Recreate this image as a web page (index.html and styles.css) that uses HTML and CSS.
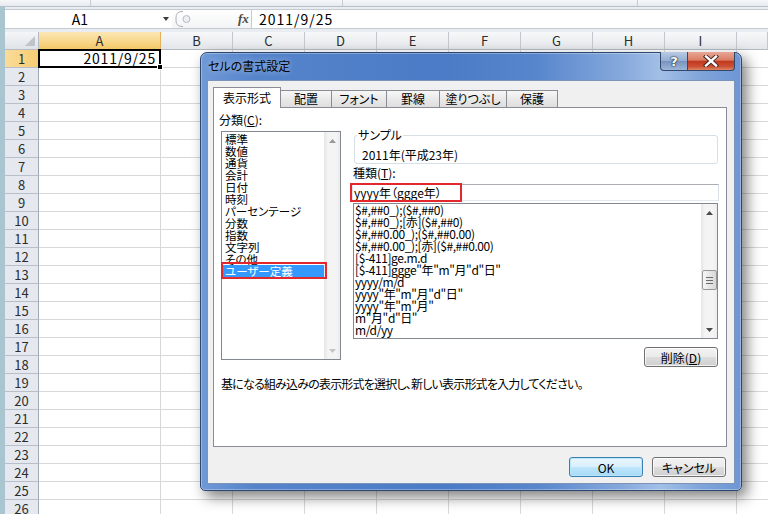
FILE: index.html
```html
<!DOCTYPE html>
<html lang="ja">
<head>
<meta charset="utf-8">
<title>セルの書式設定</title>
<link rel="stylesheet" href="styles.css">
</head>
<body>
<div class="ribbon"><div class="rseg w1"></div><div class="rseg w2"></div><div class="rseg w3"></div></div>
<div class="work">
  <div class="ftop">
    <div class="fbar">
      <div class="namebox"><span class="nb-text">A1</span><span class="nb-arrow"></span></div>
      <div class="grip">
        <svg class="grip-svg" width="24" height="18" viewBox="0 0 24 18"><path d="M9 1.5 C3 1.5 2 4 2 9 C2 14 3 16.5 9 16.5" fill="none" stroke="#a9adb3" stroke-width="1"/><circle cx="12.5" cy="9" r="3.5" fill="#eceef0" stroke="#b8bcc2" stroke-width="1"/></svg>
        <span class="fx">fx</span>
      </div>
      <div class="formula">2011/9/25</div>
    </div>
  </div>
  <div class="colhdr">
    <div class="corner"><svg width="10" height="10" viewBox="0 0 10 10"><polygon points="10,0 10,10 0,10" fill="#bfc4ca"/></svg></div>
    <div class="ch wa sel">A</div>
    <div class="ch">B</div>
    <div class="ch">C</div>
    <div class="ch">D</div>
    <div class="ch">E</div>
    <div class="ch">F</div>
    <div class="ch">G</div>
    <div class="ch">H</div>
    <div class="ch">I</div>
    <div class="ch last"></div>
  </div>
  <div class="sheet">
    <div class="rowhdrs">
      <div class="rh sel">1</div><div class="rh">2</div><div class="rh">3</div><div class="rh">4</div>
      <div class="rh">5</div><div class="rh">6</div><div class="rh">7</div><div class="rh">8</div>
      <div class="rh">9</div><div class="rh">10</div><div class="rh">11</div><div class="rh">12</div>
      <div class="rh">13</div><div class="rh">14</div><div class="rh">15</div><div class="rh">16</div>
      <div class="rh">17</div><div class="rh">18</div><div class="rh">19</div><div class="rh">20</div>
      <div class="rh">21</div><div class="rh">22</div><div class="rh">23</div><div class="rh">24</div>
      <div class="rh">25</div><div class="rh">26</div>
    </div>
    <div class="cells">
      <div class="a1">2011/9/25<span class="handle"></span></div>
    </div>
  </div>
</div>

<div class="dialog">
  <div class="titlebar">
    <span class="title">セルの書式設定</span>
    <div class="capbtns">
      <div class="cb help"><span>?</span></div>
      <div class="cb close"><svg width="16" height="12" viewBox="0 0 16 12"><path d="M3 1.5 L13 10.5 M13 1.5 L3 10.5" stroke="#3a2320" stroke-width="4.2" stroke-linecap="square"/><path d="M3 1.5 L13 10.5 M13 1.5 L3 10.5" stroke="#ffffff" stroke-width="2.4" stroke-linecap="square"/></svg></div>
    </div>
  </div>
  <div class="dbody">
    <div class="tabs">
      <div class="tab active">表示形式</div>
      <div class="tab t-haichi">配置</div>
      <div class="tab t-font">フォント</div>
      <div class="tab t-kei">罫線</div>
      <div class="tab t-nuri">塗りつぶし</div>
      <div class="tab t-hogo">保護</div>
    </div>
    <div class="panel">
      <div class="cols">
        <div class="lcol">
          <div class="lbl">分類(<u>C</u>):</div>
          <div class="catlist">
            <div class="items cat-items">
              <div class="item">標準</div>
              <div class="item">数値</div>
              <div class="item">通貨</div>
              <div class="item">会計</div>
              <div class="item">日付</div>
              <div class="item">時刻</div>
              <div class="item">パーセンテージ</div>
              <div class="item">分数</div>
              <div class="item">指数</div>
              <div class="item">文字列</div>
              <div class="item">その他</div>
              <div class="item selected">ユーザー定義</div>
            </div>
            <div class="vscroll">
              <div class="sarrow"><svg width="7" height="4" viewBox="0 0 7 4"><polygon points="3.5,0 7,4 0,4" fill="#9a9a9a"/></svg></div>
              <div class="strack"></div>
              <div class="sarrow"><svg width="7" height="4" viewBox="0 0 7 4"><polygon points="0,0 7,0 3.5,4" fill="#c4c4c4"/></svg></div>
            </div>
            <div class="redbox rb1"></div>
          </div>
        </div>
        <div class="rcol">
          <fieldset class="sample">
            <legend>サンプル</legend>
            <div class="sample-val">2011年(平成23年)</div>
          </fieldset>
          <div class="lbl kind">種類(<u>T</u>):</div>
          <div class="inputwrap">
            <div class="tinput">yyyy年（ggge年）</div>
            <div class="redbox rb2"></div>
          </div>
          <div class="fmtlist">
            <div class="items fmt-items">
              <div class="item">$#,##0_);($#,##0)</div>
              <div class="item">$#,##0_);[赤]($#,##0)</div>
              <div class="item">$#,##0.00_);($#,##0.00)</div>
              <div class="item">$#,##0.00_);[赤]($#,##0.00)</div>
              <div class="item">[$-411]ge.m.d</div>
              <div class="item">[$-411]ggge"年"m"月"d"日"</div>
              <div class="item">yyyy/m/d</div>
              <div class="item">yyyy"年"m"月"d"日"</div>
              <div class="item">yyyy"年"m"月"</div>
              <div class="item">m"月"d"日"</div>
              <div class="item">m/d/yy</div>
            </div>
            <div class="vscroll">
              <div class="sarrow"><svg width="7" height="4" viewBox="0 0 7 4"><polygon points="3.5,0 7,4 0,4" fill="#4a4a4a"/></svg></div>
              <div class="strack">
                <div class="thumb"><svg width="7" height="7" viewBox="0 0 7 7"><path d="M0 0.5H7M0 3.5H7M0 6.5H7" stroke="#6b6b6b" stroke-width="1"/></svg></div>
              </div>
              <div class="sarrow"><svg width="7" height="4" viewBox="0 0 7 4"><polygon points="0,0 7,0 3.5,4" fill="#4a4a4a"/></svg></div>
            </div>
          </div>
          <button class="btn del">削除(<u>D</u>)</button>
        </div>
      </div>
      <div class="desc">基になる組み込みの表示形式を選択し、新しい表示形式を入力してください。</div>
    </div>
    <div class="btnrow">
      <button class="btn ok">OK</button>
      <button class="btn">キャンセル</button>
    </div>
  </div>
</div>
</body>
</html>
```

FILE: styles.css
```css
* { box-sizing: border-box; }
html, body { margin: 0; padding: 0; }
body {
  width: 768px;
  height: 514px;
  overflow: hidden;
  position: relative;
  background: #ffffff;
  color: #000;
  font-family: "Noto Sans CJK JP", "Noto Sans", sans-serif;
}

/* ribbon remnant */
.ribbon {
  height: 7px;
  display: flex;
  background: linear-gradient(#f6f7f9, #e6eaef);
  border-bottom: 1px solid #b8c0ca;
}
.rseg { height: 100%; border-right: 1px solid #c6ccd4; }
.w1 { width: 91px; }
.w2 { width: 252px; }
.w3 { width: 295px; }

.work { border-left: 5px solid #a8c5d0; }

/* formula bar */
.ftop { padding: 2px 0 3px; background: #e9edf1; }
.fbar {
  height: 20px;
  display: flex;
  background: #fff;
  border-top: 1px solid #c4cad2;
  border-bottom: 1px solid #c4cad2;
}
.namebox { width: 167px; display: flex; align-items: center; }
.nb-text { width: 150px; text-align: center; font-size: 14px; line-height: 18px; }
.nb-arrow {
  width: 0; height: 0;
  margin-left: 8px;
  border-left: 3.5px solid transparent;
  border-right: 3.5px solid transparent;
  border-top: 4px solid #3c3c3c;
}
.grip {
  width: 80px;
  display: flex;
  align-items: center;
  background: linear-gradient(#ffffff, #f3f4f6);
  border-right: 1px solid #c4cad2;
}
.grip-svg { margin-left: 2px; }
.fx {
  margin-left: 40px;
  font-family: "Liberation Serif", serif;
  font-style: italic;
  font-weight: bold;
  font-size: 13px;
  color: #4a4a4a;
}
.formula { padding-left: 7px; font-size: 14px; line-height: 18px; letter-spacing: 1px; }

/* column header */
.colhdr { display: flex; height: 18px; }
.corner {
  width: 34px;
  background: linear-gradient(#f4f5f7, #dfe3e8);
  border-right: 1px solid #b6bcc3;
  border-bottom: 1px solid #b6bcc3;
  display: flex;
  align-items: flex-end;
  justify-content: flex-end;
  padding: 0 3px 3px 0;
}
.ch {
  width: 72px;
  flex: none;
  background: linear-gradient(#f7f8f9, #e3e6ea);
  border-right: 1px solid #c3c8ce;
  border-bottom: 1px solid #b3bac2;
  text-align: center;
  font-size: 13px;
  line-height: 17px;
  color: #2d2d2d;
}
.ch.wa { width: 122px; }
.ch.sel {
  background: linear-gradient(#fbe6b3, #f8d78c 55%, #f4c867);
  border-bottom: 1px solid #e3a33c;
  border-right: 1px solid #e8b05a;
}
.ch.last { flex: 1; }

/* sheet */
.sheet { display: flex; height: 470px; }
.rowhdrs { width: 34px; flex: none; }
.rh {
  height: 18px;
  background: #e5e9ef;
  border-right: 1px solid #9faab6;
  border-bottom: 1px solid #b7c0ca;
  text-align: center;
  font-size: 13px;
  line-height: 17px;
  color: #2d2d2d;
}
.rh.sel {
  background: linear-gradient(to right, #f9dc9a, #f6cc72);
  border-right: 1px solid #e3a33c;
}
.cells {
  flex: 1;
  background-color: #fff;
  background-image:
    linear-gradient(to right, transparent 121px, #d8d8d8 121px, #d8d8d8 122px, transparent 122px),
    repeating-linear-gradient(to right, transparent 0, transparent 71px, #d8d8d8 71px, #d8d8d8 72px),
    repeating-linear-gradient(to bottom, transparent 0, transparent 17px, #d8d8d8 17px, #d8d8d8 18px);
  background-position: 0 0, 122px 0, 0 0;
  background-repeat: no-repeat, no-repeat, no-repeat;
}
.a1 {
  position: relative;
  width: 123px;
  height: 19px;
  margin: -1px 0 0 -1px;
  border: 2px solid #000;
  text-align: right;
  padding-right: 3px;
  font-size: 14px;
  line-height: 15px;
  letter-spacing: 0.8px;
  background: #fff;
}
.handle {
  position: absolute;
  right: -4px;
  bottom: -4px;
  width: 6px;
  height: 6px;
  background: #000;
  border: 1px solid #fff;
}

/* dialog */
.dialog {
  position: absolute;
  left: 200px;
  top: 52px;
  width: 542px;
  height: 439px;
  border: 1px solid #2d4870;
  border-radius: 7px 7px 5px 5px;
  background: linear-gradient(to right, #6f99d7 0%, #5584cb 10%, #4b7bc6 45%, #5786cc 62%, #86a9dc 78%, #a2bfe6 85%, #7ea3d9 93%, #6d96d4 100%);
  box-shadow: 5px 6px 14px rgba(0, 0, 0, 0.5), inset 0 0 0 1px rgba(255, 255, 255, 0.3);
  padding: 0 6px 6px;
  display: flex;
  flex-direction: column;
  font-size: 12px;
  font-feature-settings: "palt";
}
.titlebar { height: 27px; display: flex; align-items: flex-start; }
.title {
  margin-top: 6px;
  padding-left: 1px;
  font-size: 12px;
  line-height: 13px;
  color: #000;
  text-shadow: 0 0 6px rgba(255, 255, 255, 0.6);
}
.capbtns { margin-left: auto; margin-top: -1px; display: flex; }
.cb {
  height: 19px;
  border: 1px solid #34496a;
  border-top: none;
  display: flex;
  align-items: center;
  justify-content: center;
}
.help {
  width: 28px;
  border-radius: 0 0 0 4px;
  background: linear-gradient(#b9cbe4, #94aed3 48%, #7894bf 52%, #9db5d8);
}
.help span {
  font-family: "DejaVu Sans", sans-serif;
  font-weight: bold;
  font-size: 13px;
  line-height: 13px;
  color: #fff;
  text-shadow: 0 0 1px #1e2c40, 0 0 1px #1e2c40, 0 0 2px #1e2c40;
}
.close {
  width: 47px;
  border-left: none;
  border-radius: 0 0 4px 0;
  background: linear-gradient(#e9a797, #d97c64 45%, #c2391f 52%, #cc4f33 80%, #dd8768);
}

.dbody {
  flex: 1;
  background: #f0f0f0;
  border: 1px solid #7c94b7;
  display: flex;
  flex-direction: column;
  padding: 0 7px 0 5px;
}
.tabs {
  height: 27px;
  margin-bottom: -1px;
  display: flex;
  align-items: flex-end;
  position: relative;
  z-index: 2;
}
.tab {
  height: 17px;
  margin-bottom: 1px;
  border: 1px solid #898c95;
  border-left: none;
  border-bottom: none;
  background: linear-gradient(#f7f7f7, #e9e9e9 50%, #dedede);
  text-align: center;
  font-size: 12px;
  line-height: 16px;
}
.tab.active {
  height: 21px;
  margin-bottom: 0;
  width: 68px;
  border-left: 1px solid #898c95;
  background: #fff;
  line-height: 19px;
}
.t-haichi { width: 51px; }
.t-font { width: 55px; }
.t-kei { width: 53px; }
.t-nuri { width: 67px; }
.t-hogo { width: 51px; }

.panel {
  height: 340px;
  background: #fff;
  border: 1px solid #898c95;
  display: flex;
  flex-direction: column;
  position: relative;
  z-index: 1;
}
.cols { display: flex; }
.lcol { width: 127px; padding-left: 5px; flex: none; }
.lbl { font-size: 12px; line-height: 12px; height: 12px; white-space: nowrap; }
.lcol .lbl { margin-top: 6px; }

.catlist {
  position: relative;
  margin: 5px 0 0 2px;
  width: 120px;
  height: 229px;
  border: 1px solid #828790;
  display: flex;
  background: #fff;
}
.items { flex: 1; min-width: 0; }
.item { height: 12px; line-height: 12px; font-size: 11.5px; white-space: nowrap; }
.cat-items { padding: 1px 0 0 1px; }
.cat-items .item { padding-left: 2px; }
.item.selected { background: #3399ff; color: #fff; }

.vscroll {
  width: 16px;
  flex: none;
  display: flex;
  flex-direction: column;
  background: linear-gradient(to right, #e6e6e6, #f4f4f4 25%, #f4f4f4 75%, #ececec);
}
.sarrow { height: 17px; display: flex; align-items: center; justify-content: center; }
.strack { flex: 1; }
.thumb {
  margin: 49px 0 0 1px;
  width: 15px;
  height: 20px;
  border: 1px solid #979797;
  border-radius: 2px;
  background: linear-gradient(to right, #f6f6f6, #e6e6e6 50%, #d8d8d8);
  display: flex;
  align-items: center;
  justify-content: center;
}

.redbox { position: absolute; border: 2px solid #e2282d; }
.rb1 { left: -1px; top: 130px; width: 106px; height: 17px; }
.rb2 { left: -2px; top: -1px; width: 112px; height: 19px; }

.rcol { margin-left: 10px; width: 368px; display: flex; flex-direction: column; }
.sample {
  margin: 21px 0 0 3px;
  padding: 0 0 0 3px;
  width: 364px;
  min-width: 0;
  border: 1px solid #d5dfe5;
  border-radius: 3px;
}
.sample legend {
  padding: 0 1px;
  margin-left: -1px;
  font-size: 12px;
  line-height: 12px;
}
.sample-val { margin: 8px 0 2px; padding-left: 4px; font-size: 12px; line-height: 12px; }
.kind { margin: 3px 0 0 2px; }
.inputwrap { position: relative; margin: 5px 0 0 1px; }
.tinput {
  width: 367px;
  height: 17px;
  border: 1px solid #abadb3;
  border-color: #abadb3 #dbdfe6 #e3e9ef #e2e3ea;
  padding-left: 1px;
  font-size: 12px;
  line-height: 15px;
  white-space: nowrap;
}
.fmtlist {
  margin: 2px 0 0 2px;
  width: 365px;
  height: 136px;
  border: 1px solid #828790;
  display: flex;
}
.fmt-items { padding-left: 1px; }
.fmt-items .item { letter-spacing: -0.4px; font-size: 12px; }

.btn {
  width: 74px;
  height: 20px;
  padding: 0;
  border: 1px solid #707070;
  border-radius: 3px;
  background: linear-gradient(#f2f2f2, #ebebeb 50%, #dddddd 51%, #cfcfcf);
  box-shadow: inset 0 0 0 1px rgba(255, 255, 255, 0.75);
  font-family: "Noto Sans CJK JP", sans-serif;
  font-feature-settings: "palt";
  font-size: 12px;
  line-height: 17px;
  color: #000;
}
.del { align-self: flex-end; margin: 8px 1px 0 0; }
.desc {
  margin-top: 11px;
  padding-left: 7px;
  font-size: 12px;
  line-height: 12px;
  letter-spacing: -0.8px;
  white-space: nowrap;
}

.btnrow {
  margin: 10px 1px 0 0;
  display: flex;
  justify-content: flex-end;
  gap: 9px;
}
.ok {
  border-color: #3c7fb1;
  box-shadow: inset 0 0 0 1px #b6e6fb;
  background: linear-gradient(#eaf6fd, #d9f0fc 50%, #bee6fd 51%, #a7d9f5);
}
```
